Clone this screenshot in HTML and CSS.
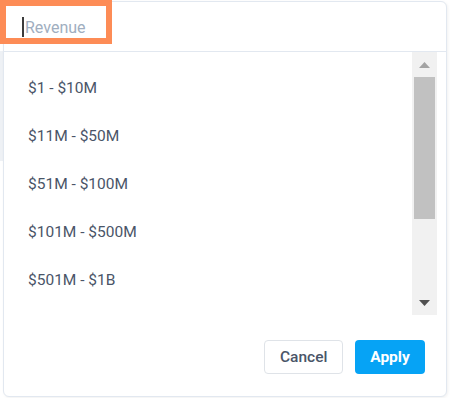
FILE: index.html
```html
<!DOCTYPE html>
<html lang="en">
<head>
    <meta charset="UTF-8">
    <meta name="viewport" content="width=device-width, initial-scale=1.0">
    <title>Revenue filter</title>
    <link rel="stylesheet" href="styles.css">
</head>
<body>
    <div class="backdrop-strip"></div>

    <div class="filtro-panel">
        <div class="filtro-header">
            <span class="caret"></span>
            <span class="placeholder">Revenue</span>
        </div>

        <div class="filtro-body">
            <ul class="opciones">
                <li class="opcion">$1 - $10M</li>
                <li class="opcion">$11M - $50M</li>
                <li class="opcion">$51M - $100M</li>
                <li class="opcion">$101M - $500M</li>
                <li class="opcion">$501M - $1B</li>
            </ul>

            <div class="scrollbar">
                <div class="scroll-btn">
                    <svg width="11" height="6" viewBox="0 0 11 6"><polygon points="5.5,0 11,6 0,6" fill="#a3a3a3"/></svg>
                </div>
                <div class="scroll-thumb"></div>
                <div class="scroll-space"></div>
                <div class="scroll-btn">
                    <svg width="11" height="6" viewBox="0 0 11 6"><polygon points="0,0 11,0 5.5,6" fill="#505050"/></svg>
                </div>
            </div>
        </div>

        <div class="filtro-footer">
            <button class="btn btn-cancel">Cancel</button>
            <button class="btn btn-apply">Apply</button>
        </div>
    </div>

    <!-- recuadro naranja que marca el campo -->
    <div class="highlight"></div>
</body>
</html>
```

FILE: styles.css
```css
* {
    margin: 0;
    padding: 0;
    box-sizing: border-box;
    font-family: 'Roboto', 'Liberation Sans', sans-serif;
}

body {
    width: 452px;
    height: 398px;
    background: #ffffff;
    position: relative;
    overflow: hidden;
}

.backdrop-strip {
    position: absolute;
    left: 0;
    top: 51px;
    width: 4px;
    height: 110px;
    background: #eef1f5;
}

.filtro-panel {
    position: relative;
    margin: 1px 0 0 3px;
    width: 444px;
    height: 396px;
    background: #ffffff;
    border: 1px solid #e2e8f0;
    border-radius: 6px;
    box-shadow: 1px 1px 3px rgba(0, 0, 0, 0.06);
    display: flex;
    flex-direction: column;
}

.filtro-header {
    height: 50px;
    border-bottom: 1px solid #e2e8f0;
    display: flex;
    align-items: center;
    padding-left: 18px;
    padding-top: 1px;
}

.caret {
    width: 2px;
    height: 20px;
    background: #3c3c3c;
    margin-right: 1px;
}

.placeholder {
    font-size: 16px;
    color: #a0aec0;
}

.filtro-body {
    height: 263px;
    display: flex;
    overflow: hidden;
}

.opciones {
    flex: 1;
    list-style: none;
    padding: 12px 0 0 24px;
}

.opcion {
    height: 48px;
    line-height: 48px;
    font-size: 15.5px;
    color: #4a5568;
}

.scrollbar {
    width: 25px;
    margin-right: 9px;
    background: #f1f1f1;
    display: flex;
    flex-direction: column;
}

.scroll-btn {
    height: 25px;
    display: flex;
    align-items: center;
    justify-content: center;
}

.scroll-btn svg {
    display: block;
}

.scroll-thumb {
    height: 142px;
    margin: 0 2px;
    background: #c1c1c1;
}

.scroll-space {
    flex: 1;
}

.filtro-footer {
    flex: 1;
    display: flex;
    justify-content: flex-end;
    align-items: flex-start;
    gap: 12px;
    padding: 25px 21px 0 0;
}

.btn {
    height: 34px;
    padding: 0 15px;
    border-radius: 4px;
    font-size: 15.5px;
    cursor: pointer;
}

.btn-cancel {
    background: #ffffff;
    border: 1px solid #dfe3e8;
    color: #4a5568;
    font-weight: 500;
    width: 79px;
}

.btn-apply {
    background: #06a3f5;
    border: none;
    color: #ffffff;
    font-weight: 700;
    width: 70px;
}

.highlight {
    position: absolute;
    left: 0;
    top: 0;
    width: 112px;
    height: 44px;
    border: 6px solid #fd8c56;
}
```
